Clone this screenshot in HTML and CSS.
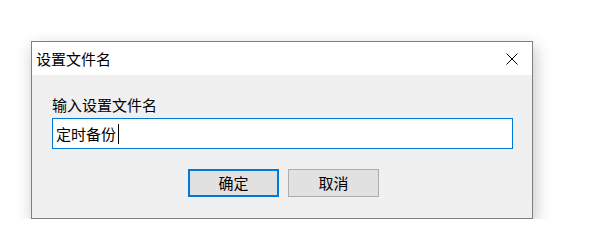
FILE: index.html
```html
<!DOCTYPE html>
<html>
<head>
<meta charset="utf-8">
<link rel="stylesheet" href="styles.css">
</head>
<body>
<div class="page">
  <div class="dialog">
    <div class="titlebar">
      <span class="title">设置文件名</span>
      <svg class="close" width="12" height="12" viewBox="0 0 12 12">
        <path d="M0.5 0.5 L11.5 11.5 M11.5 0.5 L0.5 11.5" stroke="#000" stroke-width="1" fill="none"/>
      </svg>
    </div>
    <div class="content">
      <div class="label">输入设置文件名</div>
      <div class="field"><span class="value">定时备份</span><span class="caret"></span></div>
      <div class="buttons">
        <div class="btn btn-default">确定</div>
        <div class="btn">取消</div>
      </div>
    </div>
  </div>
</div>
</body>
</html>
```
FILE: styles.css
```css
html, body {
  margin: 0;
  padding: 0;
  background: #ffffff;
}
body {
  font-family: "Noto Sans CJK SC", "Microsoft YaHei", sans-serif;
  font-size: 15px;
  color: #000;
}
.page {
  padding-top: 41px;
  padding-left: 31px;
}
.dialog {
  width: 500px;
  border: 1px solid #7f7f7f;
  background: #f0f0f0;
  box-shadow: 2px 6px 16px rgba(0, 0, 0, 0.24);
}
.titlebar {
  height: 33px;
  background: #ffffff;
  display: flex;
  align-items: center;
  justify-content: space-between;
  padding-left: 4px;
  padding-right: 14px;
}
.title {
  line-height: 20px;
}
.close {
  display: block;
}
.content {
  padding: 20px 19px 21px 20px;
}
.label {
  line-height: 20px;
  height: 20px;
  margin-bottom: 3px;
}
.field {
  height: 29px;
  border: 1px solid #0078d7;
  background: #ffffff;
  display: flex;
  align-items: center;
  padding-left: 3px;
}
.value {
  line-height: 20px;
}
.caret {
  width: 1px;
  height: 20px;
  background: #000;
  margin-left: 2px;
}
.buttons {
  margin-top: 20px;
  display: flex;
  justify-content: center;
  gap: 9px;
  padding-left: 2px;
}
.btn {
  width: 89px;
  height: 26px;
  border: 1px solid #adadad;
  background: #e1e1e1;
  display: flex;
  align-items: center;
  justify-content: center;
  line-height: 20px;
}
.btn-default {
  width: 87px;
  height: 24px;
  border: 2px solid #0078d7;
}
```
